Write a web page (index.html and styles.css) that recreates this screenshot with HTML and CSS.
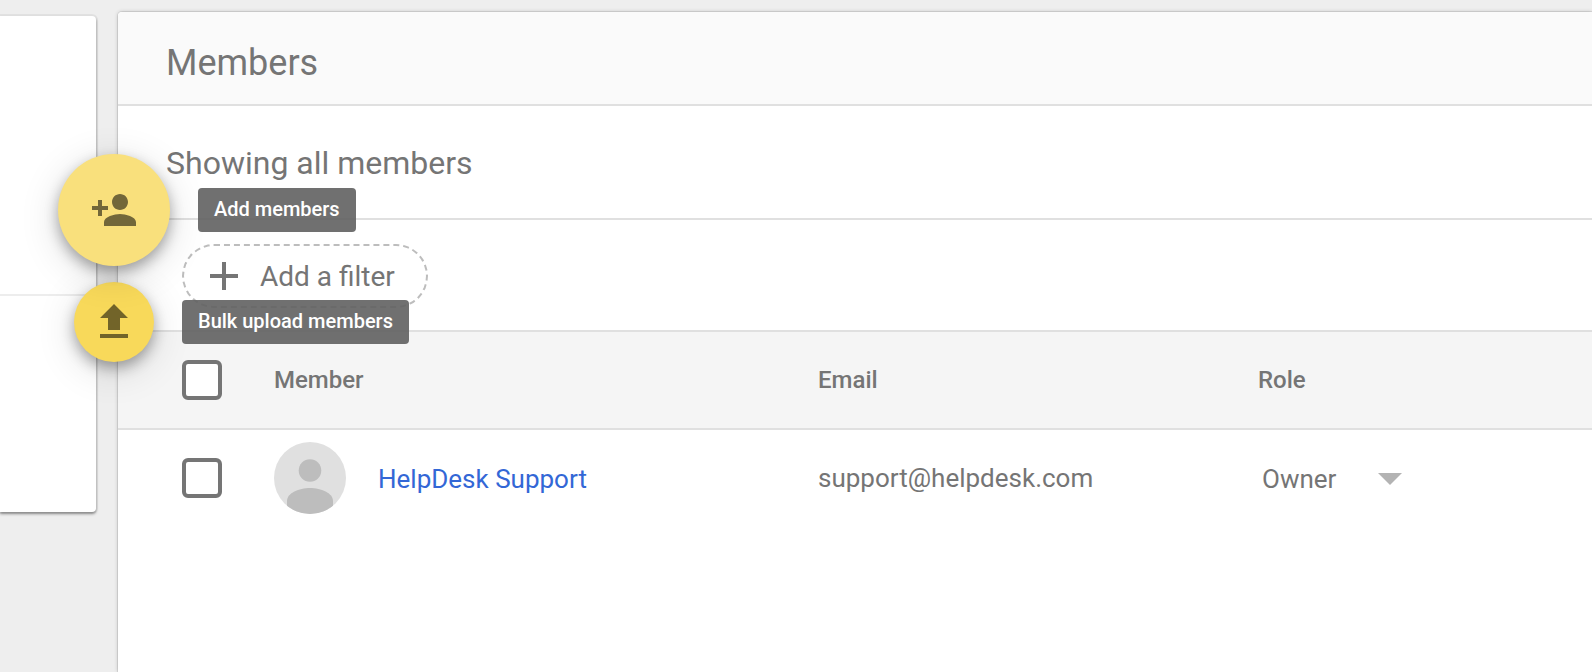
FILE: index.html
```html
<!DOCTYPE html>
<html lang="en">
<head>
<meta charset="utf-8">
<meta name="viewport" content="width=device-width, initial-scale=1">
<title>Members</title>
<link rel="stylesheet" href="styles.css">
</head>
<body>
<div class="workspace">
  <aside class="side-card">
    <div class="side-section"></div>
  </aside>

  <main class="panel">
    <header class="panel-header">
      <h1 class="panel-title">Members</h1>
    </header>
    <p class="summary">Showing all members</p>
    <div class="filter-bar">
      <button class="filter-chip" type="button">
        <svg class="plus-icon" viewBox="0 0 28 28" aria-hidden="true"><path d="M12 0h4v12h12v4H16v12h-4V16H0v-4h12z"/></svg>
        Add a filter
      </button>
    </div>
    <table class="members">
      <colgroup>
        <col class="col-check"><col class="col-member"><col class="col-email"><col>
      </colgroup>
      <thead>
        <tr>
          <th><input class="checkbox" type="checkbox" aria-label="Select all members"></th>
          <th scope="col">Member</th>
          <th scope="col">Email</th>
          <th scope="col">Role</th>
        </tr>
      </thead>
      <tbody>
        <tr>
          <td><input class="checkbox" type="checkbox" aria-label="Select HelpDesk Support"></td>
          <td>
            <div class="person">
              <svg class="avatar" viewBox="0 0 72 72" aria-hidden="true">
                <clipPath id="avatar-clip"><circle cx="36" cy="36" r="36"/></clipPath>
                <circle cx="36" cy="36" r="36" fill="#e0e0e0"/>
                <g clip-path="url(#avatar-clip)" fill="#bdbdbd">
                  <circle cx="36" cy="28.5" r="11.3"/>
                  <path d="M13 72V59c0-8 12-13 23-13s23 5 23 13v13z"/>
                </g>
              </svg>
              <a class="person-link" href="#">HelpDesk Support</a>
            </div>
          </td>
          <td class="email">support@helpdesk.com</td>
          <td>
            <div class="role">
              <select class="role-select" aria-label="Role">
                <option>Owner</option>
                <option>Manager</option>
                <option>Member</option>
              </select>
              <svg class="caret" viewBox="0 0 24 12" aria-hidden="true"><path d="M0 0h24L12 12z"/></svg>
            </div>
          </td>
        </tr>
      </tbody>
    </table>
  </main>

  <div class="speed-dial">
    <div class="action action-main">
      <button class="fab fab-large" type="button" aria-labelledby="tip-add">
        <svg class="fab-icon" viewBox="0 0 24 24" aria-hidden="true"><path d="M15 12c2.21 0 4-1.79 4-4s-1.79-4-4-4-4 1.79-4 4 1.79 4 4 4zm-9-2V7H4v3H1v2h3v3h2v-3h3v-2H6zm9 4c-2.67 0-8 1.34-8 4v2h16v-2c0-2.66-5.33-4-8-4z"/></svg>
      </button>
      <span class="tooltip" id="tip-add" role="tooltip">Add members</span>
    </div>
    <div class="action">
      <button class="fab fab-small" type="button" aria-labelledby="tip-upload">
        <svg class="fab-icon" viewBox="0 0 24 24" aria-hidden="true"><path d="M9 16h6v-6h4l-7-7-7 7h4zm-4 2h14v2H5z"/></svg>
      </button>
      <span class="tooltip" id="tip-upload" role="tooltip">Bulk upload members</span>
    </div>
  </div>
</div>
</body>
</html>
```

FILE: styles.css
```css
* {
  box-sizing: border-box;
}

body {
  margin: 0;
  background: #eee;
  color: #757575;
  font-family: Roboto, "Liberation Sans", sans-serif;
}

.workspace {
  position: relative;
  display: flex;
  align-items: flex-start;
  gap: 22px;
  min-height: 100vh;
  padding-top: 12px;
  overflow: hidden;
}

.side-card {
  flex: 0 0 96px;
  height: 496px;
  margin-top: 4px;
  background: #fff;
  border-radius: 0 4px 4px 0;
  box-shadow: 0 0 0 2px rgba(0, 0, 0, 0.05), 0 2px 3px rgba(0, 0, 0, 0.4);
}

.side-section {
  height: 280px;
  border-bottom: 2px solid #ededed;
}

.panel {
  flex: 1;
  min-width: 0;
  min-height: calc(100vh - 12px);
  background: #fff;
  border-radius: 4px 0 0 0;
  box-shadow: 0 0 0 1px rgba(0, 0, 0, 0.08), 0 0 4px rgba(0, 0, 0, 0.2);
}

.panel-header {
  padding: 30px 48px 20px;
  background: #fafafa;
  border-bottom: 2px solid #e0e0e0;
  border-radius: 4px 0 0 0;
}

.panel-title {
  margin: 0;
  font-size: 36px;
  line-height: 42px;
  font-weight: 400;
}

.summary {
  margin: 0;
  padding: 38px 48px 36px;
  border-bottom: 2px solid #e0e0e0;
  font-size: 32px;
  line-height: 38px;
}

.filter-bar {
  display: flex;
  padding: 24px 64px 22px;
  border-bottom: 2px solid #e0e0e0;
}

.filter-chip {
  display: flex;
  align-items: center;
  gap: 22px;
  height: 64px;
  padding: 0 31px 0 26px;
  border: 2px dashed #bdbdbd;
  border-radius: 32px;
  background: none;
  color: inherit;
  font: inherit;
  font-size: 28px;
}

.plus-icon {
  width: 28px;
  height: 28px;
  fill: #757575;
}

.members {
  width: 100%;
  border-collapse: separate;
  border-spacing: 0;
  table-layout: fixed;
  font-size: 26px;
}

.col-check {
  width: 156px;
}

.col-member {
  width: 544px;
}

.col-email {
  width: 440px;
}

.members th,
.members td {
  height: 96px;
  padding: 0;
  text-align: left;
  vertical-align: middle;
}

.members th {
  height: 98px;
  background: #f5f5f5;
  border-bottom: 2px solid #e0e0e0;
  font-size: 24px;
  font-weight: 500;
}

.members th:first-child,
.members td:first-child {
  padding-left: 64px;
}

.checkbox {
  appearance: none;
  display: block;
  width: 40px;
  height: 40px;
  margin: 0;
  background: #fff;
  border: 4px solid #757575;
  border-radius: 6px;
}

.person {
  display: flex;
  align-items: center;
  gap: 32px;
}

.avatar {
  width: 72px;
  height: 72px;
}

.person-link {
  padding-top: 2px;
  color: #3367d6;
  text-decoration: none;
}

.role {
  display: flex;
  align-items: center;
  position: relative;
  width: 144px;
  margin-left: 4px;
  padding-top: 2px;
}

.role-select {
  appearance: none;
  width: 100%;
  padding: 0;
  border: 0;
  background: none;
  color: inherit;
  font: inherit;
}

.caret {
  position: absolute;
  right: 4px;
  width: 24px;
  height: 12px;
  fill: #b3b3b3;
  pointer-events: none;
}

.speed-dial {
  position: absolute;
  top: 154px;
  left: 58px;
  display: flex;
  flex-direction: column;
  gap: 16px;
}

.action {
  display: flex;
  align-items: center;
  gap: 28px;
}

.action-main {
  position: relative;
  z-index: 1;
}

.fab {
  display: flex;
  align-items: center;
  justify-content: center;
  flex: none;
  padding: 0;
  border: 0;
  border-radius: 50%;
  box-shadow: 0 6px 14px rgba(0, 0, 0, 0.32), 0 8px 40px rgba(0, 0, 0, 0.14);
}

.fab-large {
  width: 112px;
  height: 112px;
  background: #f9e07c;
}

.fab-small {
  width: 80px;
  height: 80px;
  margin-left: 16px;
  background: #f8d95a;
}

.fab-icon {
  width: 48px;
  height: 48px;
  fill: #000;
  fill-opacity: 0.54;
}

.tooltip {
  padding: 9px 16px 11px;
  border-radius: 4px;
  background: rgba(97, 97, 97, 0.9);
  color: #fff;
  font-size: 20px;
  line-height: 24px;
  font-weight: 500;
  white-space: nowrap;
}
```
